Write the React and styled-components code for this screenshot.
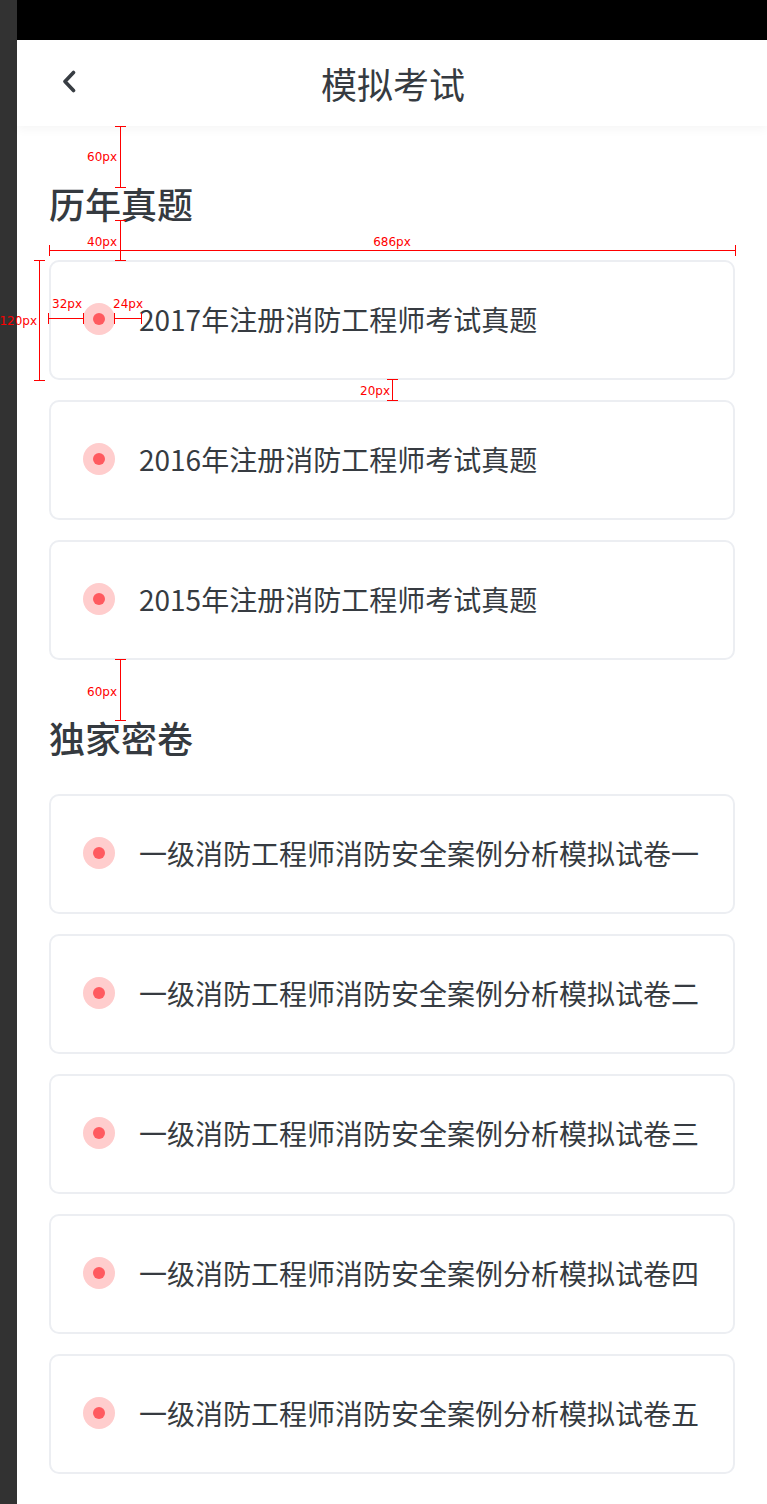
import React from "react";
import styled, { createGlobalStyle } from "styled-components";

const GlobalStyle = createGlobalStyle`
  html, body { margin: 0; padding: 0; background: #ffffff; }
  * { box-sizing: border-box; }
  body { font-family: "Noto Sans CJK SC", "Noto Sans", sans-serif; }
`;

const Page = styled.div`
  position: relative;
  display: flex;
  width: 767px;
  min-height: 1504px;
`;

const SideBar = styled.div`
  width: 17px;
  flex: none;
  background: #323232;
`;

const Main = styled.div`
  flex: 1;
  display: flex;
  flex-direction: column;
  background: #ffffff;
`;

const StatusBar = styled.div`
  height: 40px;
  background: #000000;
`;

const Header = styled.header`
  position: relative;
  z-index: 1;
  height: 86px;
  display: grid;
  grid-template-columns: 1fr auto 1fr;
  align-items: center;
  background: #ffffff;
  box-shadow: 0 3px 10px rgba(0, 0, 0, 0.045);
`;

const BackButton = styled.button`
  justify-self: start;
  margin-left: 44px;
  margin-bottom: 2px;
  padding: 0;
  border: 0;
  background: none;
  display: flex;
  align-items: center;
  cursor: pointer;
`;

const Title = styled.h1`
  margin: 0 0 0 2px;
  font-size: 36px;
  line-height: 40px;
  font-weight: 400;
  color: #363b41;
`;

const Content = styled.main`
  padding: 0 32px 30px;
`;

const Section = styled.section`
  display: flex;
  flex-direction: column;
`;

const SectionTitle = styled.h2`
  margin: 60px 0 40px;
  font-size: 36px;
  line-height: 34px;
  height: 34px;
  font-weight: 500;
  color: #353a40;
`;

const CardList = styled.div`
  display: flex;
  flex-direction: column;
  gap: 20px;
`;

const Card = styled.div`
  height: 120px;
  display: flex;
  align-items: center;
  padding-left: 32px;
  padding-bottom: 2px;
  border: 2px solid #eceef2;
  border-radius: 10px;
  background: #ffffff;
`;

const Dot = styled.span`
  width: 32px;
  height: 32px;
  flex: none;
  border-radius: 50%;
  background: #ffcdcd;
  display: flex;
  align-items: center;
  justify-content: center;
  margin-right: 24px;
  &::after {
    content: "";
    width: 12px;
    height: 12px;
    border-radius: 50%;
    background: #ff5a5f;
  }
`;

const CardText = styled.span`
  font-size: 28px;
  line-height: 36px;
  color: #363b41;
  white-space: nowrap;
`;

/* measurement overlay */
const RED = "#ff0000";

const VLine = styled.div`
  position: absolute;
  z-index: 5;
  left: ${(p) => p.$x}px;
  top: ${(p) => p.$y}px;
  width: 1px;
  height: ${(p) => p.$h}px;
  background: ${RED};
  &::before,
  &::after {
    content: "";
    position: absolute;
    left: -5px;
    width: 11px;
    height: 1px;
    background: ${RED};
  }
  &::before { top: 0; }
  &::after { bottom: 0; }
`;

const HLine = styled.div`
  position: absolute;
  z-index: 5;
  left: ${(p) => p.$x}px;
  top: ${(p) => p.$y}px;
  height: 1px;
  width: ${(p) => p.$w}px;
  background: ${RED};
  &::before,
  &::after {
    content: "";
    position: absolute;
    top: -5px;
    width: 1px;
    height: 11px;
    background: ${RED};
  }
  &::before { left: 0; }
  &::after { right: 0; }
`;

const Label = styled.span`
  position: absolute;
  z-index: 6;
  top: ${(p) => p.$cy - 8}px;
  ${(p) => (p.$right !== undefined ? `right: ${767 - p.$right}px;` : "")}
  ${(p) => (p.$cx !== undefined ? `left: ${p.$cx}px; transform: translateX(-50%);` : "")}
  height: 16px;
  font-family: "DejaVu Sans", sans-serif;
  font-size: 12px;
  line-height: 16px;
  color: ${RED};
  white-space: nowrap;
`;

const BackIcon = () => (
  <svg width="16" height="24" viewBox="0 0 16 24" fill="none">
    <polyline
      points="12.5,2.5 4,11.5 12.5,20.5"
      stroke="#383d43"
      strokeWidth="3.6"
      strokeLinecap="round"
      strokeLinejoin="round"
    />
  </svg>
);

const realExams = [
  "2017年注册消防工程师考试真题",
  "2016年注册消防工程师考试真题",
  "2015年注册消防工程师考试真题",
];

const secretExams = ["一", "二", "三", "四", "五"].map(
  (n) => `一级消防工程师消防安全案例分析模拟试卷${n}`
);

const ExamCard = ({ title }) => (
  <Card>
    <Dot />
    <CardText>{title}</CardText>
  </Card>
);

const Measurements = () => (
  <>
    <VLine $x={120} $y={126} $h={62} />
    <Label $right={117} $cy={157}>60px</Label>

    <VLine $x={120} $y={220} $h={41} />
    <Label $right={117} $cy={242}>40px</Label>

    <HLine $x={49} $y={250} $w={687} />
    <Label $cx={392} $cy={242}>686px</Label>

    <VLine $x={39} $y={260} $h={121} />
    <Label $right={37} $cy={321}>120px</Label>

    <HLine $x={48} $y={318} $w={36} />
    <Label $cx={67} $cy={304}>32px</Label>

    <HLine $x={114} $y={318} $w={28} />
    <Label $cx={128} $cy={304}>24px</Label>

    <VLine $x={392} $y={379} $h={22} />
    <Label $right={390} $cy={391}>20px</Label>

    <VLine $x={120} $y={659} $h={62} />
    <Label $right={117} $cy={692}>60px</Label>
  </>
);

export default function App() {
  return (
    <>
      <GlobalStyle />
      <Page>
        <SideBar />
        <Main>
          <StatusBar />
          <Header>
            <BackButton aria-label="返回">
              <BackIcon />
            </BackButton>
            <Title>模拟考试</Title>
            <span />
          </Header>
          <Content>
            <Section>
              <SectionTitle>历年真题</SectionTitle>
              <CardList>
                {realExams.map((t) => (
                  <ExamCard key={t} title={t} />
                ))}
              </CardList>
            </Section>
            <Section>
              <SectionTitle>独家密卷</SectionTitle>
              <CardList>
                {secretExams.map((t) => (
                  <ExamCard key={t} title={t} />
                ))}
              </CardList>
            </Section>
          </Content>
        </Main>
        <Measurements />
      </Page>
    </>
  );
}
